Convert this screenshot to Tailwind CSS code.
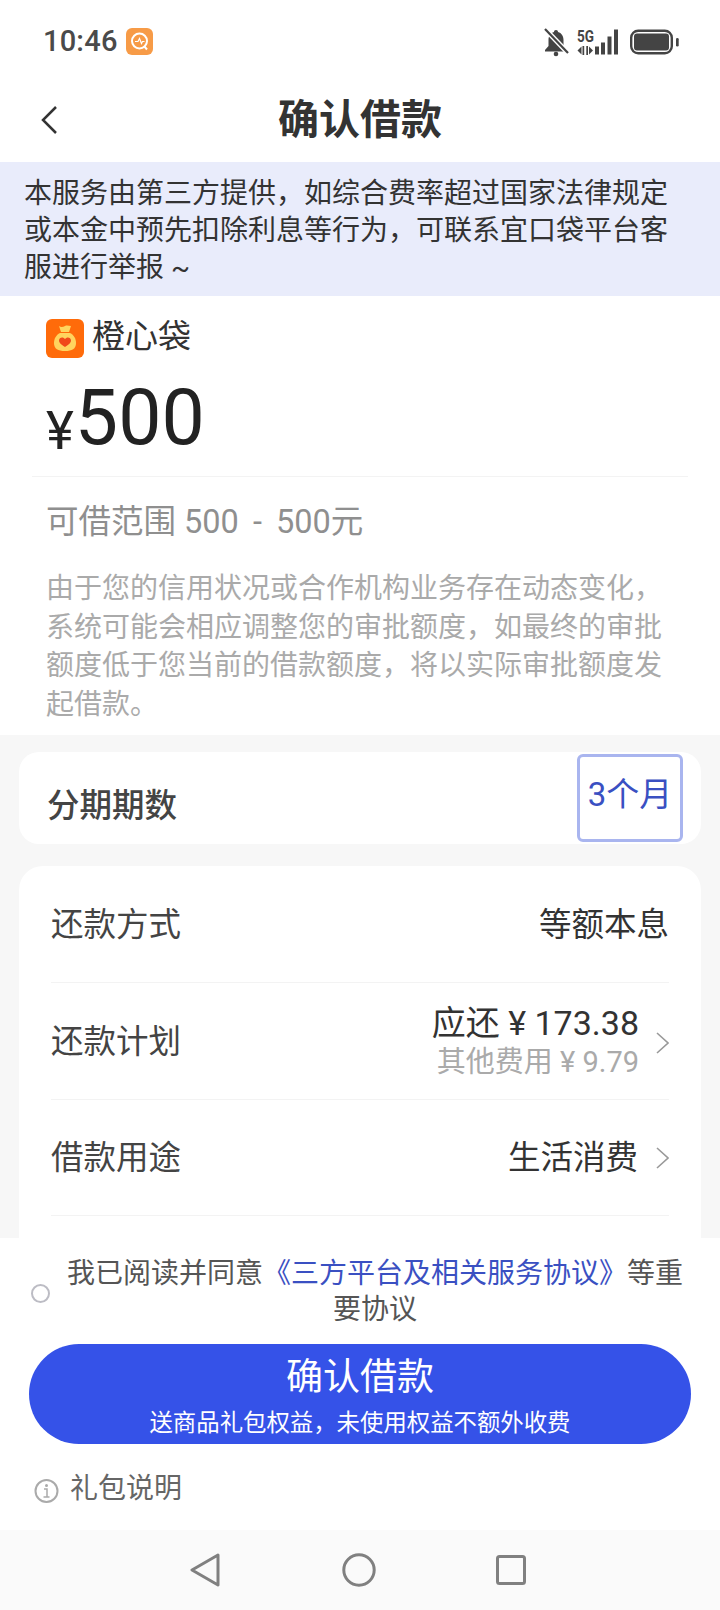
<!doctype html>
<html lang="zh-CN">
<head>
<meta charset="utf-8">
<script src="https://cdn.jsdelivr.net/npm/@tailwindcss/browser@4"></script>
</head>
<body class="m-0">
<div class="w-[720px] h-[1610px] overflow-hidden flex flex-col bg-white text-[#333] font-['Roboto','Noto_Sans_CJK_SC',sans-serif]">

  <!-- status bar -->
  <div class="h-[84px] shrink-0 flex items-center pl-[43px] pr-[41px] pb-[1px]">
    <span class="text-[29px] leading-none tracking-[0.2px] font-medium text-[#4a4a4a]">10:46</span>
    <svg class="ml-[8px]" width="28" height="28" viewBox="0 0 28 28"><rect width="27" height="27" rx="6" fill="#f79b47"/><circle cx="13.5" cy="13" r="7.5" fill="none" stroke="#fff" stroke-width="2"/><path d="M9 13.500h3l1.500-3 2 5 1-2h2" fill="none" stroke="#fff" stroke-width="1.200"/><path d="M18 18l3 3.500" stroke="#fff" stroke-width="2"/></svg>
    <div class="flex-1"></div>
    <svg width="135" height="30" viewBox="0 0 135 30" fill="#444">
      <path d="M12 3c-1.300 0-2 .8-2 2-3.500 1-5.500 4-5.500 8v6L1 23v1.500h22V23l-3.500-4v-6c0-4-2-7-5.500-8 0-1.200-.7-2-2-2z"/><circle cx="12" cy="27" r="2.300"/>
      <path d="M1 2l23 24" stroke="#fff" stroke-width="5"/><path d="M1 2l23 24" stroke="#444" stroke-width="2.200"/>
      <text x="33" y="14.500" font-size="16" font-weight="700" font-family="Roboto" textLength="17" lengthAdjust="spacingAndGlyphs">5G</text>
      <path d="M33.500 23.500l4-4v8zM49 23.500l-4-4v8z"/><rect x="38.500" y="19" width="1.700" height="9"/><rect x="42.300" y="19" width="1.700" height="9"/>
      <rect x="51" y="19.500" width="4" height="8"/><rect x="57" y="15.500" width="4" height="12"/><rect x="63.500" y="9.500" width="4" height="18"/><rect x="70" y="2.500" width="4" height="25"/>
      <rect x="87.200" y="3.700" width="40.600" height="22.600" rx="7" fill="none" stroke="#444" stroke-width="2.400"/><rect x="90" y="6.500" width="35" height="17" rx="3"/><rect x="132" y="11" width="2.700" height="8.500" rx="1.300"/>
    </svg>
  </div>

  <!-- header -->
  <div class="h-[78px] shrink-0 relative flex items-center justify-center pb-[5px]">
    <svg class="absolute left-[40px] top-[21px]" width="18" height="30" viewBox="0 0 18 30"><path d="M16 2 3 15l13 13" fill="none" stroke="#333" stroke-width="2.500"/></svg>
    <h1 class="text-[41px] leading-none font-bold text-[#333]">确认借款</h1>
  </div>

  <!-- notice -->
  <div class="h-[134px] shrink-0 bg-[#e9ecfb] pl-[24px] pr-[40px] pt-[13px] text-[28px] leading-[37px] text-[#333]">本服务由第三方提供，如综合费率超过国家法律规定或本金中预先扣除利息等行为，可联系宜口袋平台客服进行举报 ~</div>

  <!-- amount -->
  <div class="h-[439px] shrink-0 px-[32px]">
    <div class="flex items-center gap-[8px] pl-[14px] pt-[23px]">
      <svg width="38" height="39" viewBox="0 0 38 39"><rect width="38" height="39" rx="6" fill="#ff6b0a"/><path d="M13 7c2 1.500 4 1 6 0s4 0 6 0l-2 6h-8z" fill="#ffd45e"/><path d="M14 14h10c4 2 6 6 6 10 0 6-4 8-11 8s-11-2-11-8c0-4 2-8 6-10z" fill="#ffd45e"/><path d="M19 28c-3-2-6-4-6-6.500 0-3.500 4.500-4 6-1.500 1.500-2.500 6-2 6 1.500 0 2.500-3 4.500-6 6.500z" fill="#f04a1a"/></svg>
      <span class="text-[33px] leading-none text-[#333] mt-[-4px]">橙心袋</span>
    </div>
    <div class="flex items-end pl-[14px] h-[92px] pb-[5px] mt-[8px] text-[#222]">
      <span class="text-[53px] leading-[44px] mr-[1px]">¥</span>
      <span class="text-[77px] leading-[70px]">500</span>
    </div>
    <div class="h-px bg-[#f3f3f3] mt-[18px]"></div>
    <div class="pl-[14px] mt-[26px] text-[32.500px] leading-[38px] text-[#8f8f8f]">可借范围 <span class="[word-spacing:6px]">500 - 500元</span></div>
    <p class="pl-[14px] pr-[24px] mt-[29px] text-[28px] leading-[38.500px] text-[#aaa]">由于您的信用状况或合作机构业务存在动态变化，系统可能会相应调整您的审批额度，如最终的审批额度低于您当前的借款额度，将以实际审批额度发起借款。</p>
  </div>

  <!-- scroll content -->
  <div class="flex-1 min-h-0 overflow-hidden bg-[#f7f7f7] pl-[19px] pr-[19px] pt-[17px]">
    <div class="h-[92px] bg-white rounded-[20px] flex items-center justify-between pl-[28px] pr-[18px]">
      <span class="text-[32.500px] font-medium text-[#444] pt-[16px]">分期期数</span>
      <span class="w-[106px] h-[88px] border-[3px] border-[#a9b5ef] rounded-[6px] text-[33px] leading-none text-[#3a50c2] text-center pt-[21px]">3个月</span>
    </div>
    <div class="mt-[22px] bg-white rounded-[24px] pl-[32px] pr-[32px] h-[400px]">
      <div class="h-[117px] flex items-center justify-between border-b border-[#f3f3f3] pt-[3px]">
        <span class="text-[32.500px] text-[#444]">还款方式</span>
        <span class="text-[32.500px] text-[#333]">等额本息</span>
      </div>
      <div class="h-[117px] flex items-center border-b border-[#f3f3f3] pt-[3px]">
        <span class="text-[32.500px] text-[#444] flex-1">还款计划</span>
        <div class="text-right">
          <div class="text-[34px] leading-[40px] text-[#333] mt-[-2px]">应还 ¥ 173.38</div>
          <div class="text-[29px] leading-[36px] text-[#aaa] mt-[1px]">其他费用 ¥ 9.79</div>
        </div>
        <svg class="ml-[17px]" width="13" height="22" viewBox="0 0 13 22"><path d="M1 1l11 10L1 21" fill="none" stroke="#999" stroke-width="1.600"/></svg>
      </div>
      <div class="h-[116px] flex items-center border-b border-[#f3f3f3] pt-[1px]">
        <span class="text-[32.500px] text-[#444] flex-1">借款用途</span>
        <span class="text-[32.500px] text-[#333]">生活消费</span>
        <svg class="ml-[18px]" width="13" height="22" viewBox="0 0 13 22"><path d="M1 1l11 10L1 21" fill="none" stroke="#999" stroke-width="1.600"/></svg>
      </div>
    </div>
  </div>

  <!-- footer -->
  <div class="h-[292px] shrink-0 bg-white">
    <div class="flex items-center pl-[31px] pr-[30px] pt-[18px]">
      <span class="w-[19px] h-[19px] shrink-0 rounded-full border-2 border-[#bcbcc4] mt-[2px]"></span>
      <p class="flex-1 pl-[10px] text-center text-[28px] leading-[36px] text-[#555]">我已阅读并同意<span class="text-[#3a50c2]">《三方平台及相关服务协议》</span>等重要协议</p>
    </div>
    <div class="mx-[29px] mt-[16px] h-[100px] rounded-full bg-[#3552e8] text-white text-center pt-[11px]">
      <div class="text-[37px] leading-[46px]">确认借款</div>
      <div class="text-[23.400px] leading-[32px] mt-[6px]">送商品礼包权益，未使用权益不额外收费</div>
    </div>
    <div class="flex items-center gap-[11px] pl-[34px] mt-[31px]">
      <svg width="25" height="26" viewBox="0 0 25 26"><circle cx="12.500" cy="13" r="11" fill="none" stroke="#aaa" stroke-width="2"/><circle cx="12.500" cy="7.500" r="1.500" fill="#aaa"/><path d="M10 11h3v8M9.500 19h6" fill="none" stroke="#aaa" stroke-width="1.500"/></svg>
      <span class="text-[28px] leading-[36px] text-[#666] mt-[-4px]">礼包说明</span>
    </div>
  </div>

  <!-- system nav -->
  <div class="h-[80px] shrink-0 bg-[#fafafa] flex items-center justify-center pb-[1px] pr-[4px]">
    <svg width="30" height="34" viewBox="0 0 30 34"><path d="M28 2 2 17l26 15z" fill="none" stroke="#808080" stroke-width="3" stroke-linejoin="round"/></svg>
    <svg class="ml-[122px]" width="34" height="34" viewBox="0 0 34 34"><circle cx="17" cy="17" r="15.200" fill="none" stroke="#808080" stroke-width="3"/></svg>
    <svg class="ml-[120px]" width="30" height="30" viewBox="0 0 30 30"><rect x="1.500" y="1.500" width="27" height="27" rx="2" fill="none" stroke="#808080" stroke-width="3"/></svg>
  </div>
</div>
</body>
</html>
